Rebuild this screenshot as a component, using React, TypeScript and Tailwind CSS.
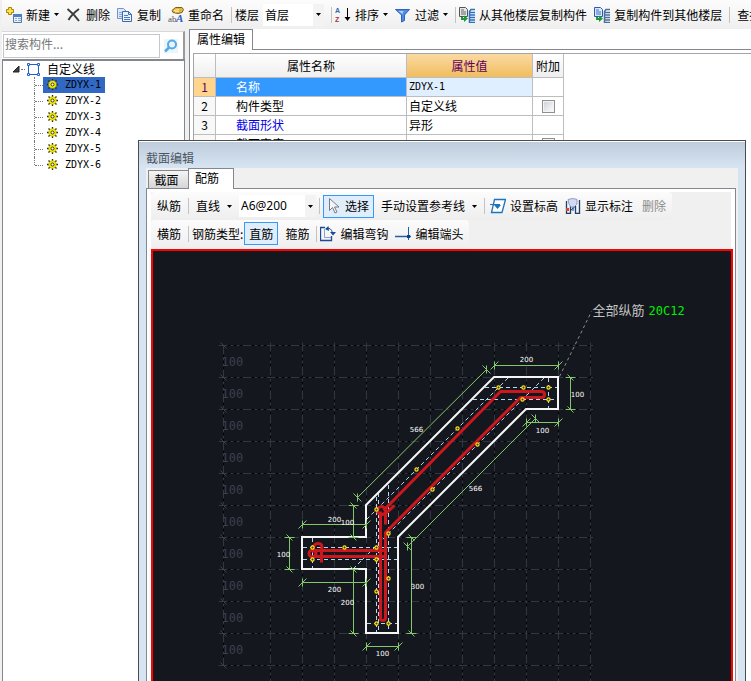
import type { ReactNode } from "react";
import clsx from "clsx";

const COMPONENTS = ["ZDYX-1", "ZDYX-2", "ZDYX-3", "ZDYX-4", "ZDYX-5", "ZDYX-6"];

const PROPERTIES = [
  { name: "名称", value: "ZDYX-1", extra: false },
  { name: "构件类型", value: "自定义线", extra: true },
  { name: "截面形状", value: "异形", extra: false },
  { name: "截面宽度", value: "", extra: true },
];

const GRID_X = [270, 302, 334, 366, 398, 430, 462, 494, 526, 558, 590];
const GRID_Y = [345, 377, 409, 441, 473, 505, 537, 569, 601, 633, 665];

const REBARS = [
  [498, 387], [523, 387], [548, 387], [522, 399], [548, 399],
  [457, 428], [477, 444], [416, 469], [432, 489], [376, 509],
  [388, 533], [312, 547], [344, 547], [376, 547], [312, 559],
  [376, 559], [388, 578], [376, 591], [376, 623], [388, 623],
];

const COVER_LINES = [
  "M485 387.5H558", "M473 399.5H558", "M548.5 378V409",
  "M508 378L367 519", "M544 378L353 569",
  "M376.5 497V633", "M378.5 493V633", "M388.5 485V633",
  "M303 547.5H398", "M303 559.5H398", "M312.5 538V569", "M367 623.5H398",
];

// x1, y1, x2, y2, label, label x, label y
const DIMENSIONS: [number, number, number, number, string, number, number][] = [
  [494, 365, 558, 365, "200", 526, 358],
  [357, 497, 486, 369, "566", 416, 428],
  [570, 377, 570, 409, "100", 577, 393],
  [526, 422, 558, 422, "100", 542, 429],
  [407, 546, 535, 418, "566", 475, 487],
  [302, 524, 366, 524, "200", 334, 518],
  [353, 505, 353, 537, "100", 347, 521],
  [289, 537, 289, 569, "100", 283, 553],
  [302, 582, 366, 582, "200", 334, 588],
  [353, 569, 353, 633, "200", 347, 601],
  [411, 537, 411, 633, "300", 417, 585],
  [366, 646, 398, 646, "100", 382, 652],
];

function Caret() {
  return (
    <svg width="5" height="3" className="shrink-0" aria-hidden="true">
      <path d="M0 0H5L2.5 3Z" fill="#000" />
    </svg>
  );
}

function Separator({ className }: { className?: string }) {
  return <span className={clsx("h-4 w-px shrink-0 bg-[#c3c3c3]", className)} />;
}

function Tool({
  icon,
  menu,
  className,
  children,
}: {
  icon?: ReactNode;
  menu?: boolean;
  className?: string;
  children: ReactNode;
}) {
  return (
    <button type="button" className={clsx("flex shrink-0 items-center gap-1", className)}>
      {icon}
      {children}
      {menu && <Caret />}
    </button>
  );
}

function Combo({ label, value, className }: { label: string; value: string; className: string }) {
  return (
    <span className={clsx("relative block h-[22px] shrink-0 bg-white", className)}>
      <select aria-label={label} className="h-full w-full appearance-none pr-3 pl-0.5 outline-none">
        <option>{value}</option>
      </select>
      <span className="pointer-events-none absolute inset-y-0 right-0 flex w-[11px] items-center justify-center bg-[#f3f3f3]">
        <Caret />
      </span>
    </span>
  );
}

function Icon({ width = 16, children }: { width?: number; children: ReactNode }) {
  return (
    <svg
      width={width}
      height="16"
      viewBox={`0 0 ${width} 16`}
      fill="none"
      className="shrink-0"
      aria-hidden="true"
    >
      {children}
    </svg>
  );
}

function NewIcon() {
  return (
    <Icon width={17}>
      <path d="M3.5 .5h3v2h2v3h-2v2h-3v-2h-2v-3h2z" fill="#ffe34a" stroke="#a88408" />
      <path d="M8.5 7.5h8v8h-8z" fill="#e9f2fc" stroke="#5277aa" />
      <path d="M8 7h9v3H8z" fill="#4d7fc4" />
      <path d="M10 11.500h2m1 0h3m-6 2h2m1 0h3" stroke="#86aada" />
    </Icon>
  );
}

function DeleteIcon() {
  return (
    <Icon>
      <path d="M1.500 2Q8 7 13 14M13 2Q6 7 2.500 13" stroke="#3c3c3c" strokeWidth="2" />
    </Icon>
  );
}

function CopyIcon() {
  return (
    <Icon>
      <path d="M.5 1.500h6l3 3v7h-9z" fill="#dbe9fa" stroke="#7295c8" />
      <path d="M2 5.500h5M2 7.500h5M2 9.500h5" stroke="#83a5d6" />
      <path d="M5.500 4.500h6l3 3v7h-9z" fill="#e9f2fd" stroke="#3f69ad" />
      <path d="M11.500 4.500v3h3" stroke="#3f69ad" />
      <path d="M7 8.500h4M7 10.500h6M7 12.500h6" stroke="#4c7ac0" />
    </Icon>
  );
}

function RenameIcon() {
  return (
    <Icon>
      <path d="M4 3.500L7.500 .5H14l1.500 2L14 5.500l-4 1-5-1z" fill="#e3b540" stroke="#7d5f1a" />
      <path d="M6 3.500l5-1M7 5l4-1" stroke="#fff0a5" />
      <text x="0" y="15" fontSize="9" fill="#555" fontFamily="Liberation Serif, serif">ab</text>
      <text x="8" y="15" fontSize="11" fontWeight="bold" fontStyle="italic" fill="#2a5fc0" fontFamily="Liberation Serif, serif">A</text>
    </Icon>
  );
}

function SortIcon() {
  return (
    <Icon>
      <text x="0" y="6" fontSize="7" fontWeight="bold" fill="#3b64ad" fontFamily="Liberation Sans, sans-serif">A</text>
      <text x="0" y="15" fontSize="7" fontWeight="bold" fill="#9c3b3b" fontFamily="Liberation Sans, sans-serif">Z</text>
      <path d="M12.500 1v11" stroke="#000" />
      <path d="M9.500 10h6l-3 4z" fill="#000" />
    </Icon>
  );
}

function FilterIcon() {
  return (
    <Icon>
      <path d="M.5 2.500h14L9.500 8v5.500l-3 1.500V8z" fill="#4f8be2" stroke="#2f62b8" />
      <path d="M3.500 4h5L7.500 7z" fill="#b2d2fa" />
    </Icon>
  );
}

function FloorCopyIcon({ blue }: { blue?: boolean }) {
  return (
    <Icon>
      <path d="M.5 .5h6l2 2v7h-8z" fill={blue ? "#dbe9fb" : "#e6e6e6"} stroke={blue ? "#2c5cab" : "#555"} />
      <path d="M2 3h3M2 5h5M2 7h5" stroke={blue ? "#3a6fc4" : "#666"} />
      <path d="M2 10v3h3v2l4-3.500L5 8.500V11H4v-1z" fill="#1d9a35" />
      <path d="M16 2.500h-4l-1.500 2v11H16M10.500 5.500H16M10.500 8H16M10.500 10.500H16M10.500 13H16" stroke={blue ? "#4c6f9a" : "#2f6fc0"} strokeWidth="1.500" />
    </Icon>
  );
}

function CursorIcon() {
  return (
    <Icon width={13}>
      <path d="M1.500 .5v12l3-3 2.500 5.500 2-1-2.500-5H11z" fill="#f5f5f5" stroke="#7a7a85" />
    </Icon>
  );
}

function ElevationIcon() {
  return (
    <Icon>
      <path d="M4.500 1.500h11L12 14.500H1.500z" fill="#fff" stroke="#1d74bb" strokeWidth="1.300" />
      <path d="M0 6.500h10" stroke="#1d74bb" />
      <path d="M4 7h7l-3.500 4z" fill="#1d74bb" />
    </Icon>
  );
}

function LabelIcon() {
  return (
    <Icon>
      <path d="M1.500 3v12.500h4V8M10.500 8v7.500h4V2" stroke="#1c3f70" strokeWidth="1.300" />
      <path d="M5.500 12.500L10 8.500M8 7v6" stroke="#1c3f70" />
      <path d="M3 1.500Q8-.5 12 1.500V6L9 9H6L4 6z" fill="#d2dbf3" stroke="#8d9bc4" />
      <path d="M1 10h3v3H1z" fill="#e0452a" />
    </Icon>
  );
}

function HookIcon() {
  return (
    <Icon>
      <path d="M5 1.500H.5v13h11V10" stroke="#1c4a96" strokeWidth="1.300" />
      <path d="M4.500 3V11.500H11" stroke="#88a4d2" />
      <path d="M6 3Q11 .5 12.500 7" stroke="#1c4a96" />
      <path d="M10 6h6l-3 3.500zM8.500 0L5 3l4 2z" fill="#1c4a96" />
    </Icon>
  );
}

function EndIcon() {
  return (
    <Icon>
      <path d="M0 10.500h16" stroke="#1c60ab" strokeWidth="1.500" />
      <path d="M13.500 1v13" stroke="#1c60ab" />
      <path d="M12 9h3v3h-3z" fill="#153f80" />
    </Icon>
  );
}

function GearIcon() {
  return (
    <svg width="12" height="12" viewBox="0 0 12 12" fill="none" className="shrink-0" aria-hidden="true">
      <path
        d="M5.500 0V11M0 5.500H11M1.500 1.500L9.500 9.500M9.500 1.500L1.500 9.500"
        stroke="#2b2800"
        strokeWidth="1.300"
      />
      <circle cx="5.500" cy="5.500" r="3.800" fill="#f7ee08" stroke="#b3aa00" strokeWidth=".6" />
      <circle cx="5.500" cy="5.500" r="1.500" fill="#fff" stroke="#3a3600" />
    </svg>
  );
}

function MainToolbar() {
  return (
    <header className="ml-0.5 flex h-[29px] shrink-0 items-center gap-[7px] overflow-hidden bg-linear-to-b from-[#fcfcfc] to-[#efefef] pl-[3px] whitespace-nowrap">
      <Tool icon={<NewIcon />} menu>新建</Tool>
      <Tool icon={<DeleteIcon />}>删除</Tool>
      <Tool icon={<CopyIcon />}>复制</Tool>
      <Tool icon={<RenameIcon />}>重命名</Tool>
      <Separator className="-mr-1" />
      <span className="flex shrink-0 items-center gap-1">
        楼层
        <Combo label="楼层" value="首层" className="w-[61px]" />
      </span>
      <Separator className="-mr-1" />
      <Tool icon={<SortIcon />} menu>排序</Tool>
      <Tool icon={<FilterIcon />} menu>过滤</Tool>
      <Separator className="-mr-1" />
      <Tool icon={<FloorCopyIcon />}>从其他楼层复制构件</Tool>
      <Tool icon={<FloorCopyIcon blue />}>复制构件到其他楼层</Tool>
      <Separator />
      <Tool>查找</Tool>
    </header>
  );
}

function ComponentTree() {
  return (
    <aside className="ml-0.5 flex w-[183px] shrink-0 flex-col pt-0.5">
      <div className="flex h-7 shrink-0 items-center justify-between border-t border-r-2 border-t-[#d8d8d8] border-r-[#9a9a9a] bg-white pr-[5px] pl-px">
        <input
          type="text"
          aria-label="搜索构件"
          placeholder="搜索构件..."
          className="h-6 w-[157px] border border-[#c3c7d0] bg-white px-px pb-1 outline-none placeholder:text-[#777]"
        />
        <button type="button" aria-label="搜索" className="bg-[#edf5fc]">
          <svg width="14" height="14" viewBox="0 0 14 14" fill="none">
            <circle cx="8" cy="5.500" r="4" fill="#e6f4fd" stroke="#54a9e6" strokeWidth="2" />
            <path d="M5 8.500L1 12.500" stroke="#54a9e6" strokeWidth="2.500" />
          </svg>
        </button>
      </div>
      <div className="flex-1 border-t-2 border-r border-l border-[#85878c] bg-white">
        <div className="flex h-4 items-center pl-[9px]">
          <svg width="8" height="8" className="shrink-0" aria-hidden="true">
            <path d="M7 1v6H1z" fill="#404040" stroke="#222" />
          </svg>
          <span className="mx-px w-1 border-t border-dotted border-[#777]" />
          <svg width="15" height="15" fill="none" className="shrink-0" aria-hidden="true">
            <path d="M2.500 2.500h10v10h-10z" stroke="#1c60d2" />
            <path d="M1.500 1.500h2v2h-2zM11.500 1.500h2v2h-2zM1.500 11.500h2v2h-2zM11.500 11.500h2v2h-2z" fill="#fff" stroke="#1c60d2" />
          </svg>
          <span className="ml-1.5">自定义线</span>
        </div>
        <ul className="ml-[31px]">
          {COMPONENTS.map((name, i) => (
            <li key={name} className="flex h-4 items-center">
              <span
                className={clsx(
                  "w-[9px] border-l border-dotted border-[#777]",
                  i === COMPONENTS.length - 1 ? "h-2 self-start" : "h-4",
                )}
              >
                <span className="mt-2 block border-t border-dotted border-[#777]" />
              </span>
              <button
                type="button"
                className={clsx(
                  "flex h-4 items-center gap-1.5 px-1 font-['DejaVu_Sans_Mono',monospace] text-[10px]",
                  i === 0 && "bg-[#3068c4]",
                )}
              >
                <GearIcon />
                {name}
              </button>
            </li>
          ))}
        </ul>
      </div>
    </aside>
  );
}

function PropertyTable() {
  return (
    <table className="w-[370px] table-fixed border-separate border-spacing-0 bg-white">
      <colgroup>
        <col className="w-[22px]" />
        <col className="w-[191px]" />
        <col className="w-[126px]" />
        <col className="w-[31px]" />
      </colgroup>
      <thead>
        <tr className="h-6 bg-linear-to-b from-white to-[#eee]">
          <th className="border-r border-b border-[#bdbdbd] p-0" aria-label="序号" />
          <th className="border-r border-b border-[#bdbdbd] p-0 font-normal">属性名称</th>
          <th className="border-r border-b border-[#bdbdbd] bg-linear-to-b from-[#fadaa2] to-[#f1bd5c] p-0 font-normal text-[#600060]">
            属性值
          </th>
          <th className="border-r border-b border-[#bdbdbd] p-0 font-normal">附加</th>
        </tr>
      </thead>
      <tbody>
        {PROPERTIES.map((row, i) => (
          <tr key={row.name} className="h-[19px]">
            <td
              className={clsx(
                "border-r border-b border-[#bdbdbd] p-0 text-center",
                i === 0 ? "bg-[#ffd58d] text-[#600060]" : "bg-[#f8f8f8]",
              )}
            >
              {i + 1}
            </td>
            <td
              className={clsx(
                "border-r border-b border-[#bdbdbd] p-0 pl-5",
                i === 0 && "bg-[#3399ff] text-white",
                i === 2 && "text-[#0000e6]",
              )}
            >
              {row.name}
            </td>
            <td
              className={clsx(
                "border-r border-b border-[#bdbdbd] p-0 pl-0.5",
                i === 0 && "bg-[#e0efff] font-['DejaVu_Sans_Mono',monospace] text-[10px]",
              )}
            >
              {row.value}
            </td>
            <td className="border-r border-b border-[#bdbdbd] p-0">
              {row.extra && (
                <input
                  type="checkbox"
                  aria-label={`附加 ${row.name}`}
                  className="mx-auto block size-[13px] appearance-none border border-[#8e8f8f] bg-linear-to-br from-[#ccd0d8] to-white ring-1 ring-[#f4f4f4] ring-inset"
                />
              )}
            </td>
          </tr>
        ))}
      </tbody>
    </table>
  );
}

function PropertyPanel() {
  return (
    <main className="ml-1 flex min-w-0 flex-1 flex-col">
      <div className="flex h-[21px] shrink-0">
        <button type="button" className="w-16 border-x border-t border-[#85878f] bg-white pb-0.5">
          属性编辑
        </button>
        <span className="flex-1 border-b border-[#85878f] bg-white" />
      </div>
      <div className="flex-1 border-l border-[#85878f] bg-white pt-[3px] pl-[3px]">
        <div className="h-full border-t border-l border-[#a5a5a5]">
          <PropertyTable />
        </div>
      </div>
    </main>
  );
}

function Dimension({ dim }: { dim: (typeof DIMENSIONS)[number] }) {
  const [x1, y1, x2, y2, label, tx, ty] = dim;
  const ticks =
    x1 === x2
      ? "M-5 0H5M-3 -3L3 3"
      : y1 === y2
        ? "M0 -4V4M-4 4L4 -4"
        : "M0 -4V4M-4 -4L4 4";
  return (
    <g stroke="#84c66e">
      <path d={`M${x1} ${y1}L${x2} ${y2}`} />
      <path d={ticks} transform={`translate(${x1} ${y1})`} />
      <path d={ticks} transform={`translate(${x2} ${y2})`} />
      <text
        x={tx}
        y={ty + 3}
        stroke="none"
        fill="#fff"
        fontSize="7"
        textAnchor="middle"
        fontFamily="DejaVu Sans, sans-serif"
      >
        {label}
      </text>
    </g>
  );
}

function SectionDrawing() {
  return (
    <svg width="578" height="430" viewBox="153 251 578 430" fill="none" className="block">
      <g transform="translate(.5 .5)">
        {["#000", "#303843"].map((color, i) => (
          <g key={color} stroke={color} strokeDasharray={i ? "9 3 3 3 3 3" : undefined}>
            {GRID_X.map((x) => (
              <path key={x} d={`M${x} 342V681`} />
            ))}
            {GRID_Y.map((y) => (
              <path key={y} d={`M218 ${y}H594`} />
            ))}
            <path d="M223 345V665" />
          </g>
        ))}
        {GRID_Y.map((y) => (
          <path key={y} d={`M220 ${y - 3}l6 6`} stroke="#3b4450" />
        ))}
        <g fill="#3a414d" fontSize="12" fontFamily="DejaVu Sans Mono, monospace">
          {GRID_Y.slice(0, -1).map((y) => (
            <text key={y} x="221" y={y + 20}>100</text>
          ))}
        </g>

        <g stroke="#b4d8f4" strokeDasharray="4 3">
          {COVER_LINES.map((d) => (
            <path key={d} d={d} transform="translate(-.5 -.5)" />
          ))}
        </g>

        <path
          d="M494 377H558V409H526L398 537V633H366V569H302V537H366V505Z"
          stroke="#f5f5f5"
          strokeWidth="2"
          transform="translate(-.5 -.5)"
        />

        {/* stirrups */}
        <g stroke="#cc171d" strokeWidth="3" strokeLinejoin="round">
          <path d="M383 510L500 391H541Q544 391 544 394T541 397H520L385 532V617Q385 620 382 620T380 617V511" />
          <circle cx="381" cy="510" r="4" />
          <path d="M385 506V524M383 515L394 505" />
          <path d="M385 550H312M312 556H385V550" />
          <circle cx="312" cy="553" r="3.500" />
          <path d="M313 552Q312 543 317.500 543T321 549V562" />
        </g>

        {REBARS.map(([x, y]) => (
          <circle key={`${x}-${y}`} cx={x} cy={y} r="1.600" fill="#3a3208" stroke="#ffe31c" strokeWidth="1.200" />
        ))}

        {DIMENSIONS.map((dim) => (
          <Dimension key={`${dim[5]}-${dim[6]}`} dim={dim} />
        ))}

        <path d="M559 376L591 311" stroke="#8d8d8d" strokeDasharray="3 3" />
        <text x="592" y="314" fill="#c4c4c4" fontSize="13" fontFamily="Noto Sans CJK SC, sans-serif">
          全部纵筋
        </text>
        <text x="648" y="314" fill="#00f000" fontSize="12" fontFamily="DejaVu Sans Mono, monospace">
          20C12
        </text>
      </g>
    </svg>
  );
}

function SectionDialog() {
  return (
    <section
      role="dialog"
      aria-label="截面编辑"
      className="absolute top-[140px] right-[5px] bottom-0 left-[138px] flex flex-col border-x border-t border-[#4b4b50] bg-[#d7e4f2]"
    >
      <h2 className="flex h-[27px] shrink-0 items-center border-t border-white bg-linear-to-b from-[#bfccdb] to-[#d7e4f2] pt-1.5 pl-[7px] text-[#4b5563]">
        截面编辑
      </h2>
      <div className="mr-[7px] ml-[7px] flex min-h-0 flex-1 flex-col bg-[#f0f0f0]">
        <div className="flex h-[21px] shrink-0 items-end">
          <span className="w-0.5 self-stretch border-b border-[#85878f]" />
          <button
            type="button"
            className="h-[19px] w-10 border border-r-0 border-[#85878f] bg-linear-to-b from-[#f5f5f5] to-[#d5d5d5] pr-1 leading-4"
          >
            截面
          </button>
          <button
            type="button"
            className="h-[21px] w-[46px] border-x border-t border-[#85878f] bg-white pr-2 pb-0.5"
          >
            配筋
          </button>
          <span className="mr-[2px] flex-1 self-stretch border-b border-[#85878f]" />
        </div>
        <div className="mr-[2px] flex min-h-0 flex-1 flex-col border-x border-[#85878f] bg-white px-1 pt-[3px]">
          <div className="flex shrink-0 flex-col items-start bg-[#f0f0f0] whitespace-nowrap">
            <div className="flex h-7 items-center gap-[7px] rounded-sm bg-linear-to-b from-[#fcfcfc] to-[#eee] px-1.5">
              <Tool>纵筋</Tool>
              <Separator />
              <Tool menu className="gap-[7px]">直线</Tool>
              <Combo
                label="钢筋信息"
                value="A6@200"
                className="w-[77px] font-['Noto_Sans',sans-serif]"
              />
              <Separator className="-mx-1" />
              <Tool
                icon={<CursorIcon />}
                className="h-[23px] border border-[#3399ff] bg-[#e0eefb] px-1"
              >
                选择
              </Tool>
              <Tool menu className="gap-[7px]">手动设置参考线</Tool>
              <Separator className="-mr-0.5" />
              <Tool icon={<ElevationIcon />}>设置标高</Tool>
              <Tool icon={<LabelIcon />}>显示标注</Tool>
              <Tool className="pl-0.5 text-[#8a8a8a]">删除</Tool>
            </div>
            <div className="flex h-[29px] items-center gap-[7px] rounded-sm bg-linear-to-b from-[#fcfcfc] to-[#eee] px-1.5 pb-0.5">
              <Tool>横筋</Tool>
              <Separator className="-mr-1" />
              <span className="flex items-center gap-px">
                钢筋类型:
                <Tool className="h-[23px] border border-[#3399ff] bg-[#e0eefb] px-1">直筋</Tool>
              </span>
              <Tool>箍筋</Tool>
              <Separator className="-mr-1" />
              <Tool icon={<HookIcon />}>编辑弯钩</Tool>
              <Tool icon={<EndIcon />}>编辑端头</Tool>
            </div>
          </div>
          <div className="-mr-0.5 min-h-0 flex-1 overflow-hidden border-x-2 border-t-2 border-[#f00] bg-[#14171e]">
            <SectionDrawing />
          </div>
        </div>
      </div>
    </section>
  );
}

export default function App() {
  return (
    <div className="relative flex h-screen flex-col overflow-hidden bg-[#f0f0f0] font-['Noto_Sans_CJK_SC',sans-serif] text-xs text-black">
      <MainToolbar />
      <div className="flex min-h-0 flex-1">
        <ComponentTree />
        <PropertyPanel />
      </div>
      <SectionDialog />
    </div>
  );
}
